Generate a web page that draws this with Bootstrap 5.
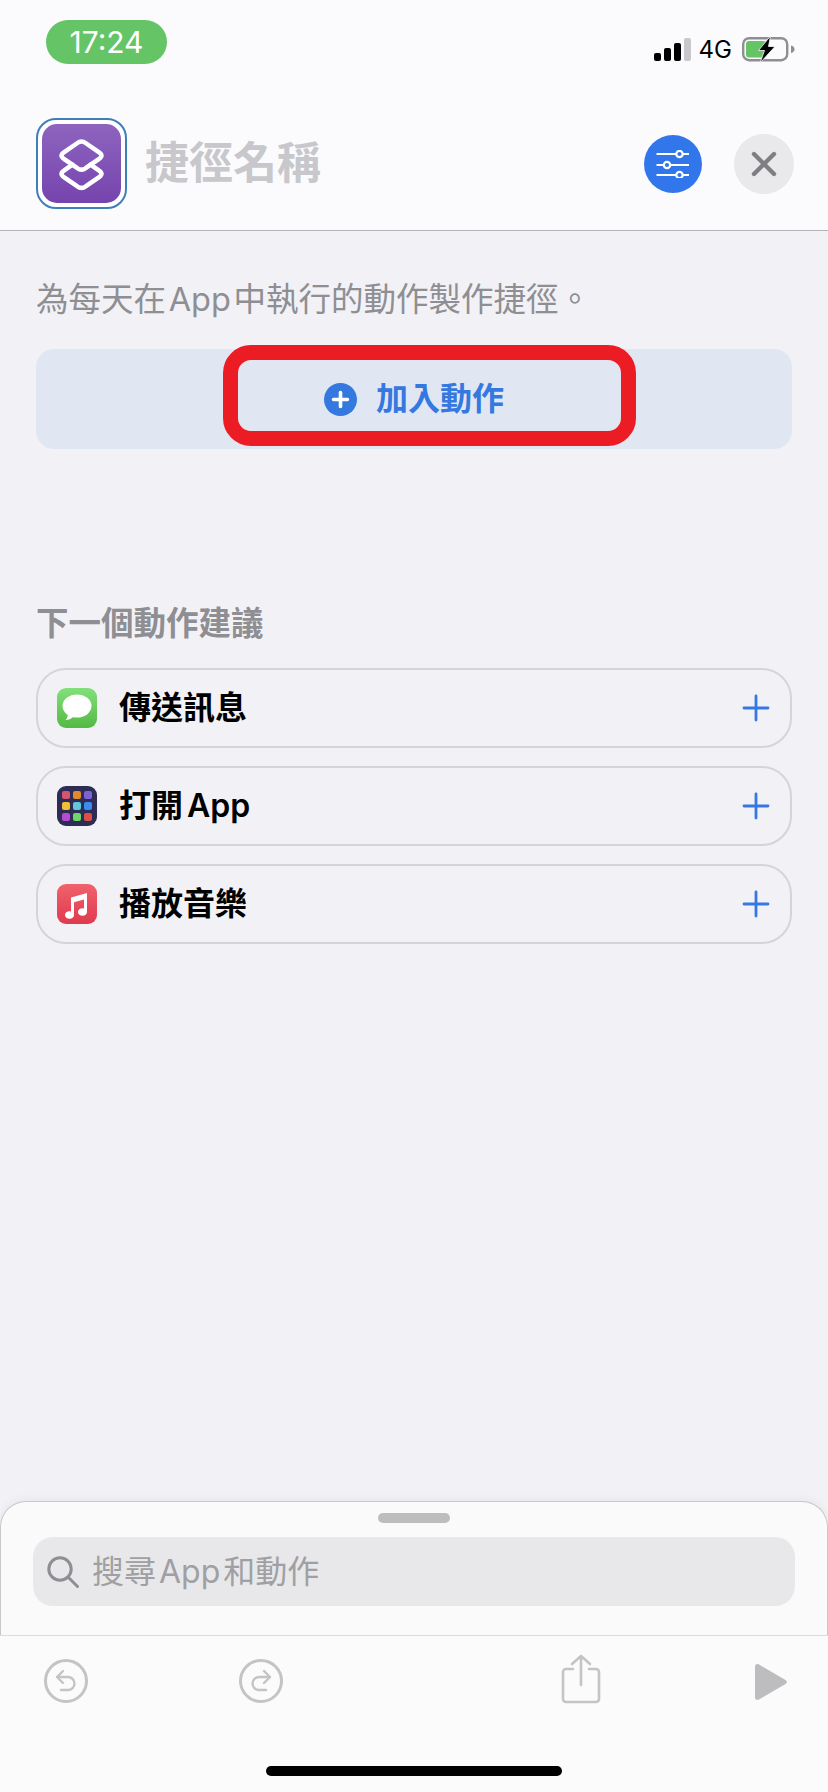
<!DOCTYPE html>
<html lang="zh-Hant">
<head>
  <meta charset="UTF-8" />
  <meta name="viewport" content="width=device-width, initial-scale=1.0"/>
  <title>捷徑名稱</title>
  <link href="https://cdn.jsdelivr.net/npm/bootstrap@5.3.0/dist/css/bootstrap.min.css" rel="stylesheet">
  <style>
    body { height: 1792px; overflow: hidden; background: #f2f2f6; font-family: Inter, "Noto Sans CJK TC", sans-serif; color: #000; }
    svg { display: block; flex: none; }

    .top-area { background: #fbfbfd; height: 231px; border-bottom: 1px solid #b4b4b8; }
    .status-row { height: 100px; padding: 20px 33px 0 46px; }
    .time-pill { width: 121px; height: 44px; border-radius: 22px; background: #65c466; color: #fff; font-size: 30px; line-height: 44px; text-align: center; }
    .status-right { margin-top: 16px; }
    .net-label { font-size: 24px; line-height: 23px; margin: 0 10px 0 8px; }
    .head-row { padding: 17px 34px 0 36px; }
    .app-frame { width: 91px; height: 91px; padding: 4px; border: 2px solid #3f7fb8; border-radius: 20px; background: #fff; }
    .app-tile { display: block; border-radius: 15px; }
    .name-title { margin-left: 18px; font-size: 44px; line-height: 93px; font-weight: 700; color: #c7c7cc; }
    .round-btn { width: 58px; height: 58px; }
    .round-blue { background: #3176ea; margin-right: 32px; }
    .round-grey { background: #e9e9eb; width: 60px; height: 60px; }

    .main-area { padding: 49px 36px 0 36px; }
    .hint-text { font-size: 32.5px; line-height: 40px; word-spacing: -6.5px; color: #8e8e93; margin-bottom: 29px; }
    .add-band { height: 100px; border-radius: 18px; background: #e1e6f3; gap: 19px; font-size: 32px; font-weight: 600; color: #3478e0; }
    .red-mark { left: 187px; top: -4px; width: 413px; height: 101px; border: 15px solid #ec1c24; border-radius: 28px; }
    .next-title { margin: 155px 0 24px; font-size: 32.5px; line-height: 40px; font-weight: 600; color: #8e8e93; }
    .action-list { gap: 18px; }
    .action-row { height: 80px; padding: 0 20px 0 19px; border: 2px solid #d4d4d9; border-radius: 30px; }
    .action-name { margin-left: 22px; font-size: 32px; line-height: 40px; font-weight: 600; word-spacing: -4px; }

    .bottom-sheet { margin-top: auto; height: 134px; background: #fafafa; border: 1px solid #c8c8cc; border-bottom: 0; border-radius: 26px 26px 0 0; box-shadow: 0 -3px 8px rgba(0,0,0,.04); }
    .sheet-handle { width: 72px; height: 10px; margin: 11px auto 14px; border-radius: 5px; background: #bdbdc0; }
    .search-field { height: 69px; margin: 0 32px; padding: 0 14px; border-radius: 20px; background: #e8e8ea; font-size: 32px; word-spacing: -6px; color: #a0a0a4; gap: 13px; }
    .tool-area { height: 157px; background: #fbfbfc; border-top: 1px solid #dcdcdf; padding: 19px 40px 0 44px; }
    .tool-redo { margin-left: 151px; }
    .tool-share { margin-left: 278px; margin-top: -1px; }
    .home-bar { left: 266px; bottom: 16px; width: 296px; height: 10px; border-radius: 5px; background: #000; }
  </style>
</head>
<body class="d-flex flex-column position-relative">

<!-- Status bar and title -->
<div class="top-area">
  <div class="status-row d-flex justify-content-between align-items-start">
    <div class="time-pill">17:24</div>
    <div class="status-right d-flex align-items-center">
      <svg width="37" height="23" viewBox="0 0 37 23">
        <rect x="0" y="15" width="7" height="8" rx="2" fill="#000"/>
        <rect x="10" y="10" width="7" height="13" rx="2" fill="#000"/>
        <rect x="20" y="5" width="7" height="18" rx="2" fill="#000"/>
        <rect x="30" y="0" width="7" height="23" rx="2" fill="#c7c7cc"/>
      </svg>
      <span class="net-label">4G</span>
      <svg width="53" height="27" viewBox="0 0 53 27">
        <rect x="1.2" y="2.2" width="44" height="22" rx="6" fill="none" stroke="#8e8e93" stroke-width="2.4"/>
        <rect x="4" y="5" width="20" height="16.4" rx="3" fill="#65c466"/>
        <path d="M49 9.5c2.5.6 3.5 2 3.5 3.7S51.500 16.300 49 17z" fill="#8e8e93"/>
        <path d="M28.500 0 16.500 14.500h6L18 27 33 10.500h-6.500z" fill="#000" stroke="#fbfbfd" stroke-width=".8"/>
      </svg>
    </div>
  </div>
  <div class="head-row d-flex align-items-center">
    <div class="app-frame">
      <svg class="app-tile" width="79" height="79" viewBox="0 0 80 80">
        <defs>
          <linearGradient id="tilePurple" x1="0" y1="0" x2="0" y2="1">
            <stop offset="0" stop-color="#8e64bf"/>
            <stop offset="1" stop-color="#7544ad"/>
          </linearGradient>
        </defs>
        <rect width="80" height="80" fill="url(#tilePurple)"/>
        <g fill="none" stroke="#fff" stroke-width="4.600" stroke-linejoin="round" stroke-linecap="round">
          <path d="M35.500 19.500Q40 16 44.500 19.500L57.500 28.500Q63 32 57.500 35.500L44.500 44.500Q40 48 35.500 44.500L22.500 35.500Q17 32 22.500 28.500Z"/>
          <path d="M30.800 41.200 22.500 47Q17 50.500 22.500 54L35.500 63Q40 66.500 44.500 63L57.500 54Q63 50.500 57.500 47L49.200 41.200"/>
        </g>
      </svg>
    </div>
    <div class="name-title me-auto">捷徑名稱</div>
    <div class="round-btn round-blue rounded-circle d-flex align-items-center justify-content-center">
      <svg width="36" height="28" viewBox="0 0 36 28" fill="none" stroke="#fff" stroke-width="2.200">
        <path d="M1.500 4H34M1.500 15H34M1.500 25H34"/>
        <circle cx="24.500" cy="4" r="3.200" fill="#3176ea"/>
        <circle cx="12" cy="15" r="3.200" fill="#3176ea"/>
        <circle cx="24.500" cy="25" r="3.200" fill="#3176ea"/>
      </svg>
    </div>
    <div class="round-btn round-grey rounded-circle d-flex align-items-center justify-content-center">
      <svg width="26" height="26" viewBox="0 0 26 26" fill="none" stroke="#7f7f83" stroke-width="4.400" stroke-linecap="round">
        <path d="M3 3 23 23M23 3 3 23"/>
      </svg>
    </div>
  </div>
</div>

<!-- Content -->
<div class="main-area">
  <div class="hint-text">為每天在 App 中執行的動作製作捷徑。</div>
  <div class="add-band position-relative d-flex align-items-center justify-content-center">
    <svg width="33" height="33" viewBox="0 0 33 33">
      <circle cx="16.500" cy="16.500" r="16.500" fill="#3478e0"/>
      <path d="M16.500 9.500v14M9.500 16.500h14" stroke="#fff" stroke-width="3.600" stroke-linecap="round"/>
    </svg>
    <span>加入動作</span>
    <div class="red-mark position-absolute"></div>
  </div>

  <div class="next-title">下一個動作建議</div>
  <div class="action-list d-flex flex-column">
    <div class="action-row d-flex align-items-center">
      <svg width="40" height="40" viewBox="0 0 40 40">
        <defs>
          <linearGradient id="tileGreen" x1="0" y1="0" x2="0" y2="1">
            <stop offset="0" stop-color="#82e07a"/>
            <stop offset="1" stop-color="#54b944"/>
          </linearGradient>
        </defs>
        <rect width="40" height="40" rx="9" fill="url(#tileGreen)"/>
        <ellipse cx="20" cy="18" rx="14.500" ry="11.500" fill="#fff"/>
        <path d="M11 25c0 3-1 5.500-2.500 7 3.500 0 6-1.500 8-3.500z" fill="#fff"/>
      </svg>
      <span class="action-name me-auto">傳送訊息</span>
      <svg width="28" height="28" viewBox="0 0 28 28" stroke="#3478e0" stroke-width="2.800" stroke-linecap="round">
        <path d="M14 2v24M2 14h24"/>
      </svg>
    </div>
    <div class="action-row d-flex align-items-center">
      <svg width="40" height="40" viewBox="0 0 40 40">
        <rect width="40" height="40" rx="9" fill="#2c2c54"/>
        <rect x="5" y="5" width="8" height="8" rx="2" fill="#d5546f"/>
        <rect x="16" y="5" width="8" height="8" rx="2" fill="#e58a2c"/>
        <rect x="27" y="5" width="8" height="8" rx="2" fill="#7c62d6"/>
        <rect x="5" y="16" width="8" height="8" rx="2" fill="#f2c036"/>
        <rect x="16" y="16" width="8" height="8" rx="2" fill="#62c8dc"/>
        <rect x="27" y="16" width="8" height="8" rx="2" fill="#3e8bf0"/>
        <rect x="5" y="27" width="8" height="8" rx="2" fill="#b84bd0"/>
        <rect x="16" y="27" width="8" height="8" rx="2" fill="#6fd46a"/>
        <rect x="27" y="27" width="8" height="8" rx="2" fill="#d9504a"/>
      </svg>
      <span class="action-name me-auto">打開 App</span>
      <svg width="28" height="28" viewBox="0 0 28 28" stroke="#3478e0" stroke-width="2.800" stroke-linecap="round">
        <path d="M14 2v24M2 14h24"/>
      </svg>
    </div>
    <div class="action-row d-flex align-items-center">
      <svg width="40" height="40" viewBox="0 0 40 40">
        <defs>
          <linearGradient id="tileRed" x1="0" y1="0" x2="0" y2="1">
            <stop offset="0" stop-color="#f0626c"/>
            <stop offset="1" stop-color="#df3a4e"/>
          </linearGradient>
        </defs>
        <rect width="40" height="40" rx="9" fill="url(#tileRed)"/>
        <g fill="#fff">
          <path d="M14 13.500 30 9v19h-3V15.500l-10 2.800V31h-3z"/>
          <ellipse cx="12.500" cy="31" rx="4.500" ry="3.800"/>
          <ellipse cx="25.500" cy="28" rx="4.500" ry="3.800"/>
        </g>
      </svg>
      <span class="action-name me-auto">播放音樂</span>
      <svg width="28" height="28" viewBox="0 0 28 28" stroke="#3478e0" stroke-width="2.800" stroke-linecap="round">
        <path d="M14 2v24M2 14h24"/>
      </svg>
    </div>
  </div>
</div>

<!-- Search sheet -->
<div class="bottom-sheet">
  <div class="sheet-handle"></div>
  <div class="search-field d-flex align-items-center">
    <svg width="32" height="32" viewBox="0 0 32 32" fill="none" stroke="#8e8e93" stroke-width="3" stroke-linecap="round">
      <circle cx="13" cy="13" r="11.200"/>
      <path d="M21.500 21.500 30.500 30.500"/>
    </svg>
    <span>搜尋 App 和動作</span>
  </div>
</div>

<!-- Toolbar -->
<div class="tool-area d-flex align-items-start">
  <svg class="mt-1" width="44" height="44" viewBox="0 0 44 44" fill="none" stroke="#c4c4c6" stroke-width="2.400" stroke-linecap="round" stroke-linejoin="round">
    <circle cx="22" cy="22" r="20.500" stroke-width="3"/>
    <path d="M19 12 13 18l6 6M13 18h11a6.500 6.500 0 0 1 0 13h-7"/>
  </svg>
  <svg class="mt-1 tool-redo" width="44" height="44" viewBox="0 0 44 44" fill="none" stroke="#c4c4c6" stroke-width="2.400" stroke-linecap="round" stroke-linejoin="round">
    <circle cx="22" cy="22" r="20.500" stroke-width="3"/>
    <path d="M25 12l6 6-6 6M31 18H20a6.500 6.500 0 0 0 0 13h7"/>
  </svg>
  <svg class="tool-share" width="40" height="50" viewBox="0 0 40 50" fill="none" stroke="#c4c4c6" stroke-width="2.600" stroke-linecap="round" stroke-linejoin="round">
    <path d="M12 15H5a3 3 0 0 0-3 3v27a3 3 0 0 0 3 3h30a3 3 0 0 0 3-3V18a3 3 0 0 0-3-3h-7"/>
    <path d="M20 31V2M11 10l9-8 9 8"/>
  </svg>
  <svg class="ms-auto mt-2" width="34" height="38" viewBox="0 0 34 38">
    <path d="M1 3.500C1 1.500 3 .5 5 1.500L31.500 17c1.800 1 1.800 3 0 4L5 36.500c-2 1-4 0-4-2z" fill="#bdbdbf"/>
  </svg>
</div>
<div class="home-bar position-absolute"></div>

</body>
</html>
